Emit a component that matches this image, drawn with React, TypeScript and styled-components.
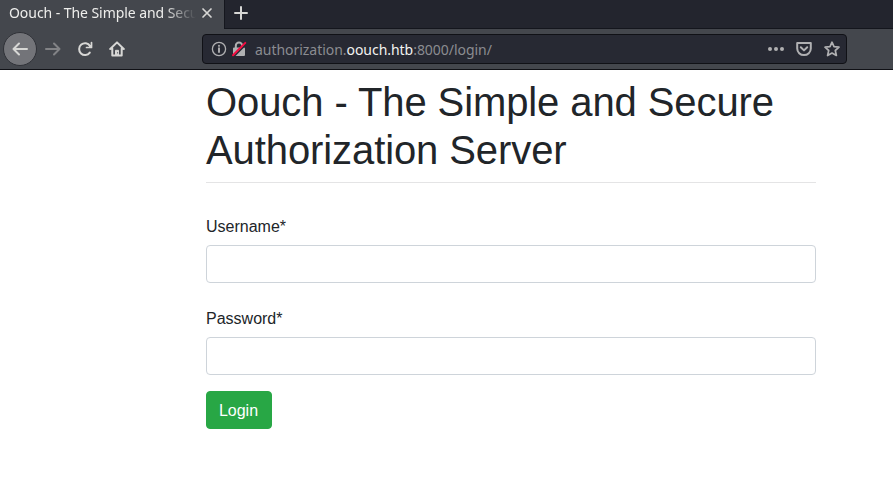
import React from "react";
import styled, { createGlobalStyle } from "styled-components";

const GlobalStyle = createGlobalStyle`
  *, *::before, *::after { box-sizing: border-box; }
  body { margin: 0; background: #fff; overflow: hidden; }
`;

const Browser = styled.div`
  width: 893px;
  height: 489px;
  display: flex;
  flex-direction: column;
  font-family: "Noto Sans", sans-serif;
`;

const TabBar = styled.div`
  height: 29px;
  flex: none;
  display: flex;
  background: #23252e;
`;

const Tab = styled.div`
  width: 224px;
  display: flex;
  align-items: flex-start;
  padding-left: 9px;
  background: #44474d;
`;

const TabTitle = styled.div`
  width: 187px;
  height: 26px;
  overflow: hidden;
  white-space: nowrap;
  font-size: 14px;
  letter-spacing: -0.06px;
  line-height: 26px;
  color: #eeeeec;
  mask-image: linear-gradient(to right, #000 155px, transparent 187px);
`;

const TabClose = styled.span`
  display: flex;
  padding: 5px 0 0 3px;
`;

const TabStrip = styled.div`
  flex: 1;
  border-left: 1px solid #15171e;
  border-bottom: 1px solid #14161d;
  padding: 4px 0 0 8px;
`;

const Toolbar = styled.div`
  height: 41px;
  flex: none;
  display: flex;
  align-items: center;
  background: #44474d;
  border-bottom: 1px solid #101116;
  padding-left: 3px;
`;

const BackButton = styled.span`
  width: 34px;
  height: 34px;
  display: flex;
  align-items: center;
  justify-content: center;
  border-radius: 50%;
  background: #737479;
  border: 1px solid #303238;
`;

const NavButton = styled.span<{ $muted?: boolean }>`
  width: 32px;
  display: flex;
  justify-content: center;
  opacity: ${(p) => (p.$muted ? 0.42 : 1)};
`;

const AddressBar = styled.div`
  width: 645px;
  height: 30px;
  margin-left: 69px;
  display: flex;
  align-items: center;
  padding: 0 6px 0 8px;
  background: #272933;
  border: 1px solid #101116;
  border-radius: 4px;
`;

const Identity = styled.span`
  display: flex;
  gap: 4px;
`;

const Address = styled.span`
  flex: 1;
  margin-left: 8px;
  padding-top: 2px;
  font-size: 14px;
  letter-spacing: -0.04px;
  line-height: 20px;
  color: #8b8c91;
`;

const Domain = styled.span`
  color: #f2f2f0;
`;

const Actions = styled.span`
  display: flex;
  gap: 12px;
`;

const Page = styled.main`
  width: 610px;
  margin-left: 206px;
  padding-top: 8px;
  font-family: "Liberation Sans", Arial, sans-serif;
  font-size: 16px;
  line-height: 24px;
  color: #212529;
`;

const Heading = styled.h1`
  margin: 0;
  padding-bottom: 8px;
  border-bottom: 1px solid #e4e4e5;
  font-size: 40px;
  font-weight: 400;
  letter-spacing: -0.095px;
  line-height: 48px;
`;

const LoginForm = styled.form`
  margin-top: 30px;
`;

const Field = styled.div`
  margin-bottom: 16px;
  & + & { padding-top: 6px; }
`;

const Label = styled.label`
  display: block;
  margin-bottom: 6px;
  padding-top: 2px;
  line-height: 24px;
`;

const Input = styled.input`
  display: block;
  width: 100%;
  height: 38px;
  padding: 6px 12px;
  border: 1px solid #ced4da;
  border-radius: 4px;
  background: #fff;
  font: inherit;
`;

const LoginButton = styled.button`
  display: block;
  width: 66px;
  height: 38px;
  padding: 2px 1px 0 0;
  border: 1px solid #28a745;
  border-radius: 4px;
  background: #28a745;
  color: #fff;
  font: inherit;
`;

type IconProps = { children: React.ReactNode; color?: string; width?: number };

const Icon = ({ children, color = "#d7d7d5", width = 2 }: IconProps) => (
  <svg
    width="16"
    height="16"
    viewBox="0 0 16 16"
    fill="none"
    stroke={color}
    strokeWidth={width}
    strokeLinecap="round"
    strokeLinejoin="round"
  >
    {children}
  </svg>
);

const grey = "#b0b0b2";

export default function App() {
  return (
    <Browser>
      <GlobalStyle />
      <TabBar>
        <Tab>
          <TabTitle>Oouch - The Simple and Secure Authorization Server</TabTitle>
          <TabClose>
            <Icon width={1.7}>
              <path d="M4 4l8 8M12 4l-8 8" />
            </Icon>
          </TabClose>
        </Tab>
        <TabStrip>
          <Icon>
            <path d="M8 2v12M2 8h12" />
          </Icon>
        </TabStrip>
      </TabBar>
      <Toolbar>
        <BackButton>
          <Icon>
            <path d="M15 8H1.5M7 2.5L1.5 8L7 13.5" />
          </Icon>
        </BackButton>
        <NavButton $muted>
          <Icon>
            <path d="M1 8h13.5M9 2.5L14.5 8L9 13.5" />
          </Icon>
        </NavButton>
        <NavButton>
          <Icon>
            <path d="M12.8 11.6A5.9 5.9 0 1 1 13 4.9" />
            <path d="M14.5 1.5V6.5H9.5" strokeWidth="1.7" />
            <path d="M14.5 4V6.5H12z" fill="#d7d7d5" strokeWidth="1" />
          </Icon>
        </NavButton>
        <NavButton>
          <Icon>
            <path d="M1.2 8L8 1.4L14.8 8M3.3 7.5V14.6H12.7V7.5" />
            <path d="M6.5 14V9.3h3V14z" fill="#d7d7d5" strokeWidth="1" />
            <path d="M8.6 11.7v.3" stroke="#44474d" strokeWidth="1" />
          </Icon>
        </NavButton>
        <AddressBar>
          <Identity>
            <Icon color={grey} width={1.3}>
              <circle cx="8" cy="8" r="6.6" />
              <path d="M8 7.3v3.8M8 4.7v.2" strokeWidth="1.9" />
            </Icon>
            <Icon color={grey}>
              <path d="M4.8 7V4.8a3.2 3.2 0 0 1 6.4 0V7" />
              <path d="M3 7.5h10v6.5H3z" fill={grey} />
              <path d="M3 15.4L15.6 2.8" stroke="#272933" strokeWidth="1.5" />
              <path d="M2 14.2L14.3 1.9" stroke="#f40b40" />
            </Icon>
          </Identity>
          <Address>
            authorization.<Domain>oouch.htb</Domain>:8000/login/
          </Address>
          <Actions>
            <Icon color={grey}>
              <g fill={grey} stroke="none">
                <circle cx="2" cy="8" r="2" />
                <circle cx="8" cy="8" r="2" />
                <circle cx="14" cy="8" r="2" />
              </g>
            </Icon>
            <Icon color={grey}>
              <path d="M1.2 2H14.8V7.5A6.8 6.6 0 0 1 1.2 7.5z" />
              <path d="M4.8 6.3L8 9.4L11.2 6.3" />
            </Icon>
            <Icon color={grey} width={1.7}>
              <path d="M8 1.2L10 5.7L15 6.2L11.3 9.5L12.4 14.5L8 12L3.6 14.5L4.7 9.5L1 6.2L6 5.7z" />
            </Icon>
          </Actions>
        </AddressBar>
      </Toolbar>
      <Page>
        <Heading>Oouch - The Simple and Secure Authorization Server</Heading>
        <LoginForm>
          <Field>
            <Label htmlFor="username">Username*</Label>
            <Input id="username" type="text" />
          </Field>
          <Field>
            <Label htmlFor="password">Password*</Label>
            <Input id="password" type="password" />
          </Field>
          <LoginButton type="button">Login</LoginButton>
        </LoginForm>
      </Page>
    </Browser>
  );
}
